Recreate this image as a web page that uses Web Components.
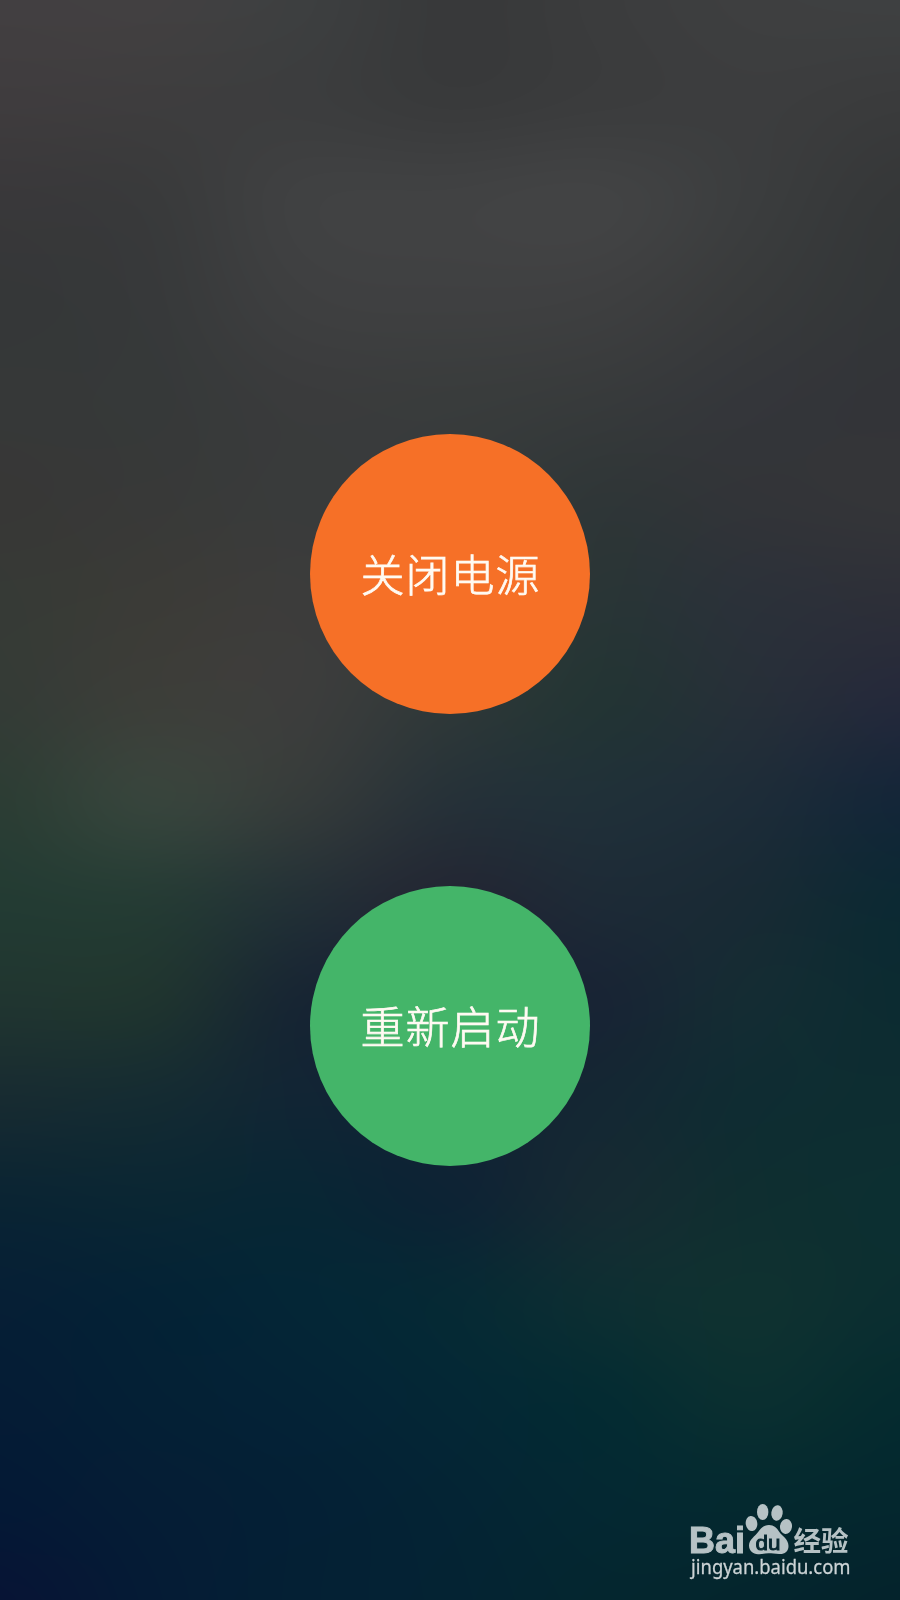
<!DOCTYPE html>
<html lang="zh-CN">
<head>
<meta charset="utf-8">
<title>电源</title>
<style>html,body{margin:0;padding:0;background:#06202f}</style>
</head>
<body>
<power-screen></power-screen>
<script>
// Soft wallpaper: a coarse colour mesh, smoothly interpolated over a canvas.
class SoftWallpaper extends HTMLElement {
  constructor() {
    super();
    this.attachShadow({mode: 'open'}).innerHTML =
      '<style>:host{display:block}canvas{display:block;width:100%;height:100%}</style><canvas width="900" height="1600"></canvas>';
    const mesh = [
      '423f41 424041 3d3f40 38393a 3b3c3d 3e3f40 3e4041',
      '3f3c3e 3e3d3e 3c3d3e 393a3b 3b3c3d 3c3d3e 3a3b3c',
      '39383a 393a3b 404142 414243 424344 3b3d3e 353738',
      '353738 37393a 3e3f40 3f4041 3e3f40 383a3b 333638',
      '363838 363939 3a3b3c 393c3c 373a3b 34363a 333438',
      '373736 383938 393b3b 363a3b 2f3637 323438 343538',
      '363a36 3b3b37 3c3c3b 353a3a 293536 2b3139 2d2f38',
      '343b36 3c3e39 3c3d3c 2f3838 233434 262f38 24293a',
      '2c3d34 37443c 353b3a 263138 203038 1d2c38 142638',
      '233b33 253b34 233036 222633 1d2a36 182a34 0c2933',
      '203530 1f342f 172533 182134 182434 142c33 0c2b31',
      '172b31 142b32 112534 122334 142733 0f2c32 0d2d31',
      '0a2433 0a2633 082634 0d2334 152a32 0f2e30 0c2f31',
      '061f35 042235 042636 062934 0d2e32 0f3130 0b2e30',
      '051c35 042035 042336 042735 042b32 0a2f30 052b2f',
      '041935 051d35 042035 042434 042832 04292f 04272e',
      '071435 051b35 042034 042333 04262f 04252d 04232c'
    ].map(r => r.split(' ').map(h => [0, 2, 4].map(i => parseInt(h.substr(i, 2), 16))));
    const cubic = (a, b, c, d, t) =>
      b + .5 * t * (c - a + t * (2 * a - 5 * b + 4 * c - d + t * (3 * (b - c) + d - a)));
    const at = (list, i) => list[Math.max(0, Math.min(list.length - 1, i))];
    const ctx = this.shadowRoot.querySelector('canvas').getContext('2d');
    const img = ctx.createImageData(900, 1600);
    let p = 0;
    for (let y = 0; y < 1600; y++) {
      const r = Math.floor(y / 100), v = y / 100 - r;
      const row = mesh[0].map((_, c) => [0, 1, 2].map(k =>
        cubic(at(mesh, r - 1)[c][k], at(mesh, r)[c][k], at(mesh, r + 1)[c][k], at(mesh, r + 2)[c][k], v)));
      for (let x = 0; x < 900; x++) {
        const c = Math.floor(x / 150), u = x / 150 - c;
        const A = at(row, c - 1), B = row[c], C = at(row, c + 1), D = at(row, c + 2);
        for (let k = 0; k < 3; k++) img.data[p++] = cubic(A[k], B[k], C[k], D[k], u);
        img.data[p++] = 255;
      }
    }
    ctx.putImageData(img, 0, 0);
  }
}
customElements.define('soft-wallpaper', SoftWallpaper);

class RoundAction extends HTMLElement {
  constructor() {
    super();
    this.attachShadow({mode: 'open'}).innerHTML = `
      <style>
        :host{display:block;width:280px;height:280px}
        button{all:unset;box-sizing:border-box;display:flex;align-items:center;justify-content:center;
          width:100%;height:100%;border-radius:50%;background:var(--action-color);color:#fffaf2;
          font:300 44px/60px "Noto Sans CJK SC",sans-serif;letter-spacing:1px;padding:0 0 3px 1px;
          -webkit-text-stroke:.7px #fffaf2;cursor:pointer}
      </style>
      <button><slot></slot></button>`;
  }
}
customElements.define('round-action', RoundAction);

class BaiduMark extends HTMLElement {
  constructor() {
    super();
    this.attachShadow({mode: 'open'}).innerHTML = `
      <style>:host{display:block;width:180px;height:90px}svg{display:block}</style>
      <svg width="180" height="90" viewBox="0 0 180 90" fill="#b6c2c5">
        <text x="9" y="57.500" font-family="Liberation Sans,sans-serif" font-weight="700" font-size="36" textLength="56" lengthAdjust="spacingAndGlyphs" stroke="#b6c2c5" stroke-width="1">Bai</text>
        <ellipse cx="71.5" cy="28.5" rx="5.8" ry="7.6" transform="rotate(-8 71.5 28.5)"/>
        <ellipse cx="82.7" cy="17" rx="5.7" ry="8"/>
        <ellipse cx="97" cy="18" rx="5.7" ry="7.7" transform="rotate(8 97 18)"/>
        <ellipse cx="106" cy="31.5" rx="6" ry="7.5" transform="rotate(7 106 31.5)"/>
        <path d="M89 30C94 30 97 33 99 36.500C102 41 108.500 44 108.500 51C108.500 57 104 59.500 99 59C95 58.600 92 58.300 88.500 58.300C85 58.300 82 59.500 78 59.200C73 58.700 69 56 69 50.500C69 44.500 75 41.500 78.500 36.500C81 33 84 30 89 30Z"/>
        <text x="75.500" y="54.500" fill="#06262f" font-family="Liberation Sans,sans-serif" font-size="21" textLength="25" lengthAdjust="spacingAndGlyphs" stroke="#06262f" stroke-width=".9">du</text>
        <text x="113.500" y="56" font-family="Noto Sans CJK SC,sans-serif" font-weight="700" font-size="27.500" textLength="55" lengthAdjust="spacingAndGlyphs">经验</text>
        <text x="11" y="78.500" font-family="Noto Sans,sans-serif" font-size="20.500" textLength="159.500" lengthAdjust="spacingAndGlyphs" fill="#ccd3d5" stroke="#ccd3d5" stroke-width=".3">jingyan.baidu.com</text>
      </svg>`;
  }
}
customElements.define('baidu-mark', BaiduMark);

class PowerScreen extends HTMLElement {
  constructor() {
    super();
    this.attachShadow({mode: 'open'}).innerHTML = `
      <style>
        :host{display:grid;width:900px;height:1600px;overflow:hidden}
        soft-wallpaper,main,baidu-mark{grid-area:1/1}
        main{display:flex;flex-direction:column;align-items:center;justify-content:center;gap:172px;z-index:1}
        .off{--action-color:#f67027}
        .restart{--action-color:#44b569}
        baidu-mark{z-index:1;justify-self:end;align-self:end;margin:0 40px 15px 0}
      </style>
      <soft-wallpaper></soft-wallpaper>
      <main>
        <round-action class="off">关闭电源</round-action>
        <round-action class="restart">重新启动</round-action>
      </main>
      <baidu-mark></baidu-mark>`;
  }
}
customElements.define('power-screen', PowerScreen);
</script>
</body>
</html>
